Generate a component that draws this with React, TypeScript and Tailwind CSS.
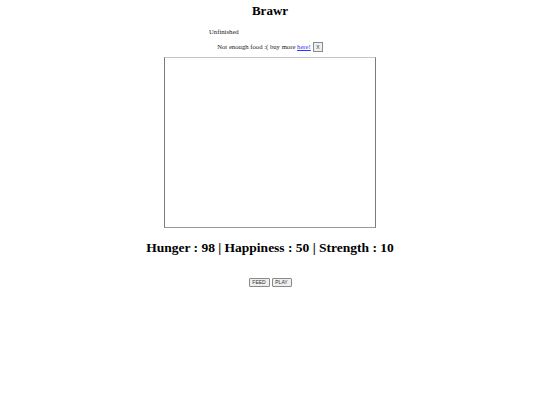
export default function App() {
  const serif = { fontFamily: '"Liberation Serif", "Times New Roman", serif' };
  const sans = { fontFamily: '"Liberation Sans", Arial, sans-serif' };
  return (
    <div className="w-[540px] h-[405px] bg-white text-black flex flex-col items-center" style={serif}>
      <h1 className="mt-[3px] text-[13px] leading-[16px] font-bold">Brawr</h1>
      <div className="mt-[9px] w-[122px] text-[6.7px] leading-[8px] text-[#222]">Unfinished</div>
      <div className="mt-[6px] flex items-center gap-[2px] text-[6.7px] leading-[8px] text-[#222]">
        <span>
          Not enough food :( buy more{' '}
          <a href="#" className="text-[#3333ff] underline">here!</a>
        </span>
        <button
          className="h-[10px] w-[10px] flex items-center justify-center border border-[#8a8a8a] bg-[#efefef] text-[5px] leading-none text-[#333]"
          style={sans}
        >
          X
        </button>
      </div>
      <div className="mt-[5px] w-[212px] h-[171px] border border-[#7a7a7a] border-t-[#c4c4c4] border-b-[#9a9a9a]" />
      <h2 className="mt-[11px] text-[13.5px] leading-[18px] font-bold">
        Hunger : 98 | Happiness : 50 | Strength : 10
      </h2>
      <div className="mt-[21px] flex gap-[2px] text-[#333]" style={sans}>
        <button className="h-[9px] w-[21px] flex items-center justify-center border border-[#8a8a8a] bg-[#efefef] text-[5px] leading-none rounded-[1px]">
          FEED
        </button>
        <button className="h-[9px] w-[20px] flex items-center justify-center border border-[#8a8a8a] bg-[#efefef] text-[5px] leading-none rounded-[1px]">
          PLAY
        </button>
      </div>
    </div>
  );
}
